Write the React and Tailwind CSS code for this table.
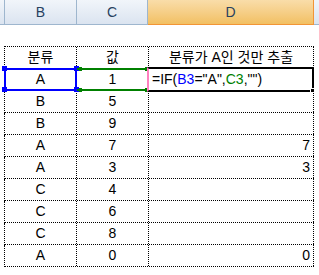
const rows = [
  ['A', '1', null],
  ['B', '5', ''],
  ['B', '9', ''],
  ['A', '7', '7'],
  ['A', '3', '3'],
  ['C', '4', ''],
  ['C', '6', ''],
  ['C', '8', ''],
  ['A', '0', '0'],
]

const font = { fontFamily: '"Liberation Sans", "Noto Sans CJK KR", sans-serif' }

function ColHeader({ w, label, active }) {
  const base = active
    ? 'bg-gradient-to-b from-[#f9dda9] to-[#f2c062] border-r border-b border-[#f29536]'
    : 'bg-gradient-to-b from-[#f1f5fa] to-[#dbe4f0] border-r border-b border-[#9eb6ce]'
  return (
    <div className={`${w} h-full flex items-center justify-center text-[14px] text-[#27415f] ${base}`}>
      {label}
    </div>
  )
}

function Cell({ w, children, align = 'center', top }) {
  return (
    <div
      className={`${w} h-full flex items-end border-r border-dotted border-black pb-[3px] ${
        align === 'right' ? 'justify-end pr-[3px]' : 'justify-center'
      } ${top ? '' : ''}`}
    >
      <span className="leading-[16px]">{children}</span>
    </div>
  )
}

function Handle({ className }) {
  return <div className={`absolute w-[5px] h-[5px] ${className}`} />
}

export default function App() {
  return (
    <div className="w-[319px] h-[275px] bg-white overflow-hidden text-black" style={font}>
      {/* column headers */}
      <div className="flex h-[25px]">
        <ColHeader w="w-[5px]" label="" />
        <ColHeader w="w-[72px]" label="B" />
        <ColHeader w="w-[71px]" label="C" />
        <ColHeader w="w-[166px]" label="D" active />
        <ColHeader w="flex-1 border-r-0" label="" />
      </div>

      {/* sheet body */}
      <div className="relative ml-[4px] mt-[21px] w-[310px] text-[14px]">
        <div className="flex h-[23px] border-t border-b border-l border-dotted border-black">
          <Cell w="w-[72px]">분류</Cell>
          <Cell w="w-[72px]">값</Cell>
          <Cell w="w-[165px]">분류가 A인 것만 추출</Cell>
        </div>
        {rows.map(([kind, value, out], i) => (
          <div key={i} className="flex h-[22px] border-b border-l border-dotted border-black">
            <Cell w="w-[72px]">{kind}</Cell>
            <Cell w="w-[72px]">{value}</Cell>
            {out === null ? (
              <div className="w-[165px] h-full flex items-end pb-[3px] pl-[3px]">
                <span className="leading-[16px]">
                  =IF(<span className="text-[#0000ff]">B3</span>="A",<span className="text-[#008000]">C3</span>,"")
                </span>
              </div>
            ) : (
              <Cell w="w-[165px]" align="right">{out}</Cell>
            )}
          </div>
        ))}

        {/* range highlight for B3 */}
        <div className="absolute left-0 top-[22px] w-[73px] h-[23px] border-2 border-[#0000ff]" />
        <Handle className="left-[-2px] top-[20px] bg-[#0000ff]" />
        <Handle className="left-[-2px] top-[41px] bg-[#0000ff]" />
        <Handle className="left-[70px] top-[20px] bg-[#0000ff]" />
        <Handle className="left-[70px] top-[41px] bg-[#0000ff]" />

        {/* range highlight for C3 */}
        <div className="absolute left-[73px] top-[22px] w-[72px] h-[23px] border-y-2 border-r-2 border-[#008000]" />
        <div className="absolute left-[75px] top-[21px] w-[3px] h-[4px] bg-[#008000]" />
        <div className="absolute left-[75px] top-[42px] w-[3px] h-[4px] bg-[#008000]" />
        <div className="absolute left-[141px] top-[21px] w-[3px] h-[4px] bg-[#008000]" />
        <div className="absolute left-[141px] top-[42px] w-[3px] h-[4px] bg-[#008000]" />

        {/* cell being edited */}
        <div className="absolute left-[143px] top-[21px] w-[167px] h-[25px] border-2 border-black border-l-[#ff80c0]" />
        <div className="absolute left-[306px] top-[42px] w-[5px] h-[5px] bg-black border border-white" />
      </div>
    </div>
  )
}
